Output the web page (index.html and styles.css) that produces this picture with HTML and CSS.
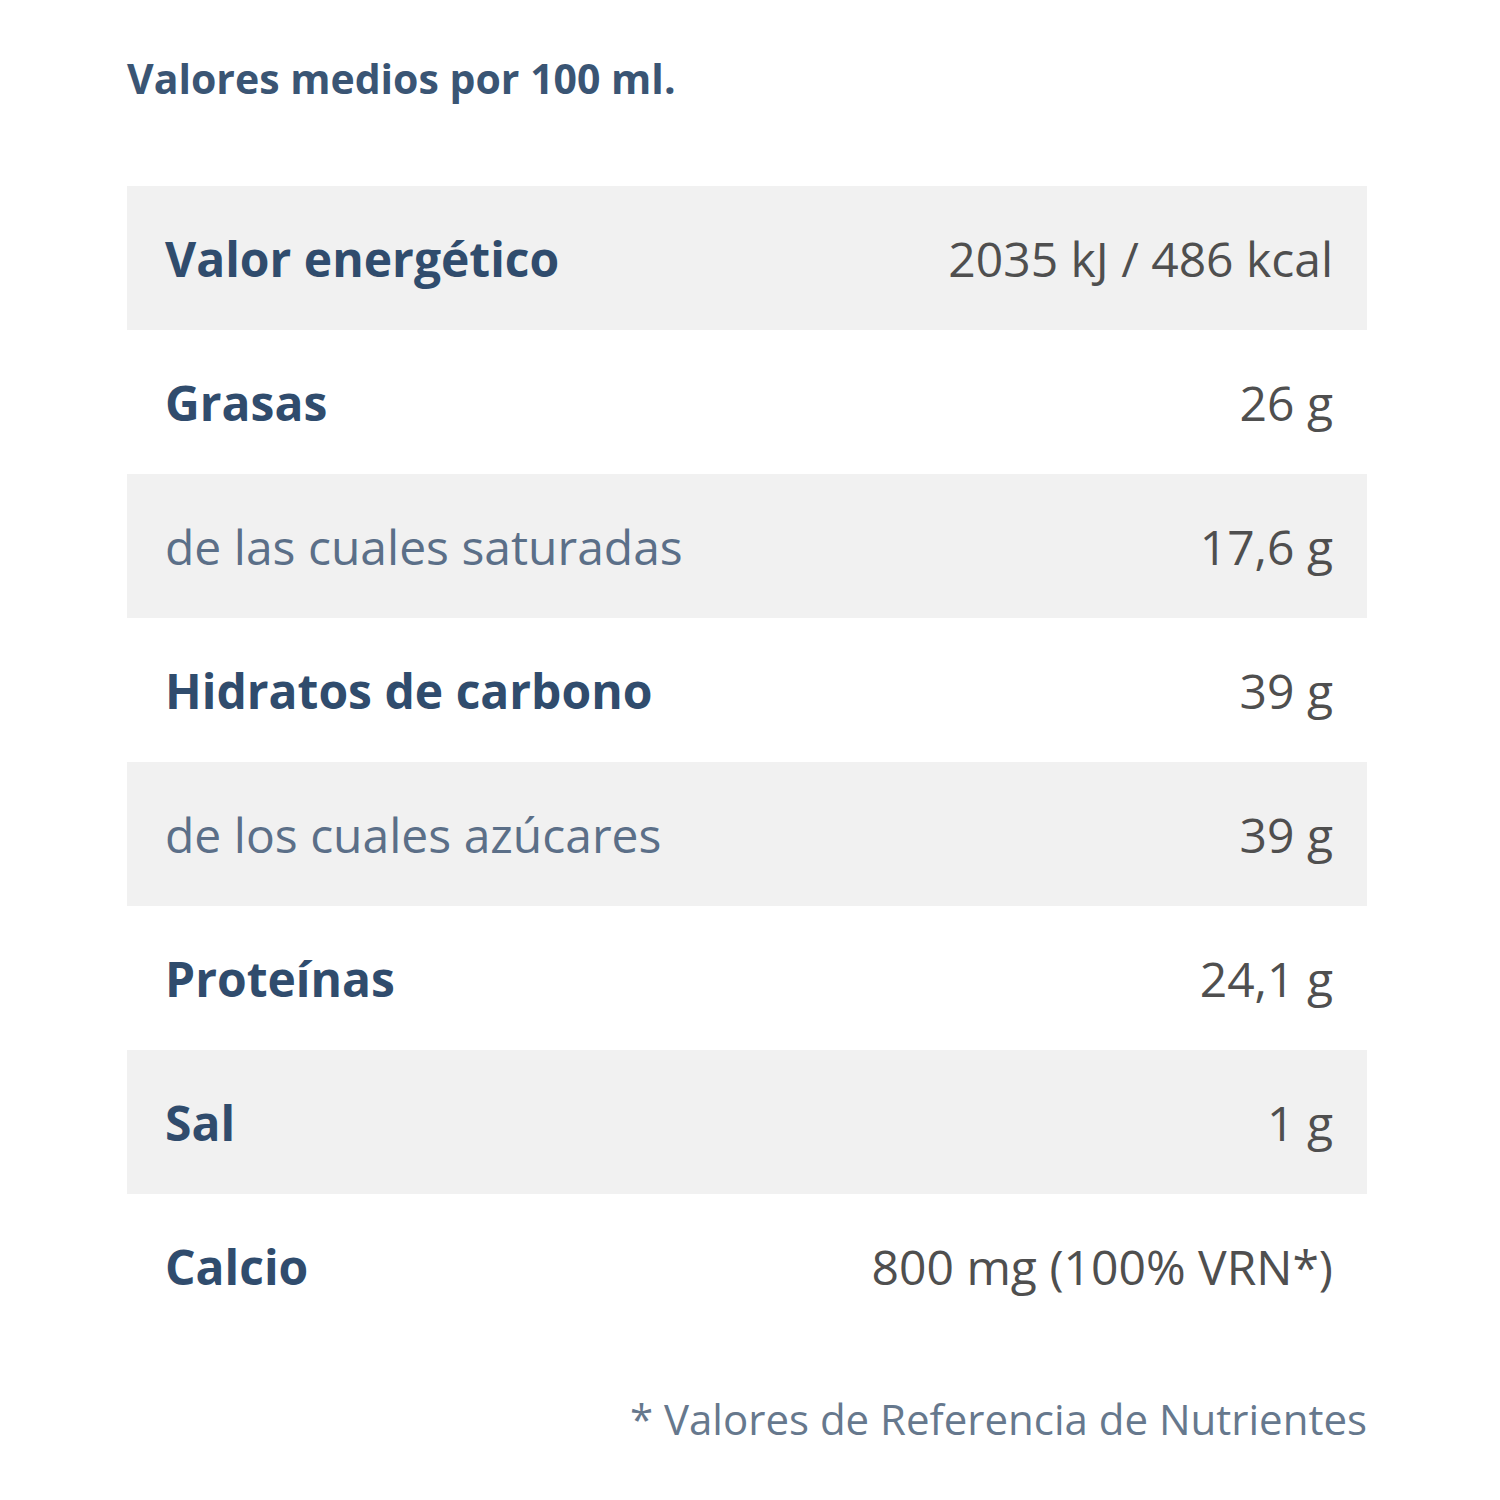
FILE: index.html
```html
<!DOCTYPE html>
<html lang="es">
<head>
<meta charset="utf-8">
<title>Información nutricional</title>
<link rel="stylesheet" href="styles.css">
</head>
<body>
<div class="panel">
  <h2 class="title">Valores medios por 100 ml.</h2>
  <div class="table">
    <div class="row shaded"><span class="label">Valor energético</span><span class="value">2035 kJ / 486 kcal</span></div>
    <div class="row"><span class="label">Grasas</span><span class="value">26 g</span></div>
    <div class="row shaded"><span class="label sub">de las cuales saturadas</span><span class="value">17,6 g</span></div>
    <div class="row"><span class="label">Hidratos de carbono</span><span class="value">39 g</span></div>
    <div class="row shaded"><span class="label sub">de los cuales azúcares</span><span class="value">39 g</span></div>
    <div class="row"><span class="label">Proteínas</span><span class="value">24,1 g</span></div>
    <div class="row shaded"><span class="label">Sal</span><span class="value">1 g</span></div>
    <div class="row"><span class="label">Calcio</span><span class="value">800 mg (100% VRN*)</span></div>
  </div>
  <p class="note">* Valores de Referencia de Nutrientes</p>
</div>
</body>
</html>
```

FILE: styles.css
```css
html, body {
  margin: 0;
  padding: 0;
  background: #ffffff;
}
body {
  font-family: "Open Sans", "Noto Sans", sans-serif;
}
.panel {
  width: 1240px;
  padding: 52px 0 0 127px;
}
.title {
  margin: 0;
  font-size: 41px;
  font-weight: 700;
  color: #3a5574;
  line-height: 52px;
}
.table {
  margin-top: 82px;
  display: flex;
  flex-direction: column;
}
.row {
  height: 144px;
  display: flex;
  align-items: center;
  justify-content: space-between;
  padding: 0 34px 0 38px;
}
.row.shaded {
  background: #f1f1f1;
}
.label {
  font-size: 48px;
  font-weight: 700;
  color: #304c6d;
}
.label.sub {
  font-size: 48px;
  font-weight: 400;
  color: #5b6f88;
}
.value {
  font-size: 48px;
  font-weight: 400;
  color: #4f4f4f;
}
.note {
  margin: 53px 0 0 0;
  text-align: right;
  font-size: 42px;
  line-height: 56px;
  color: #66788d;
}
```
